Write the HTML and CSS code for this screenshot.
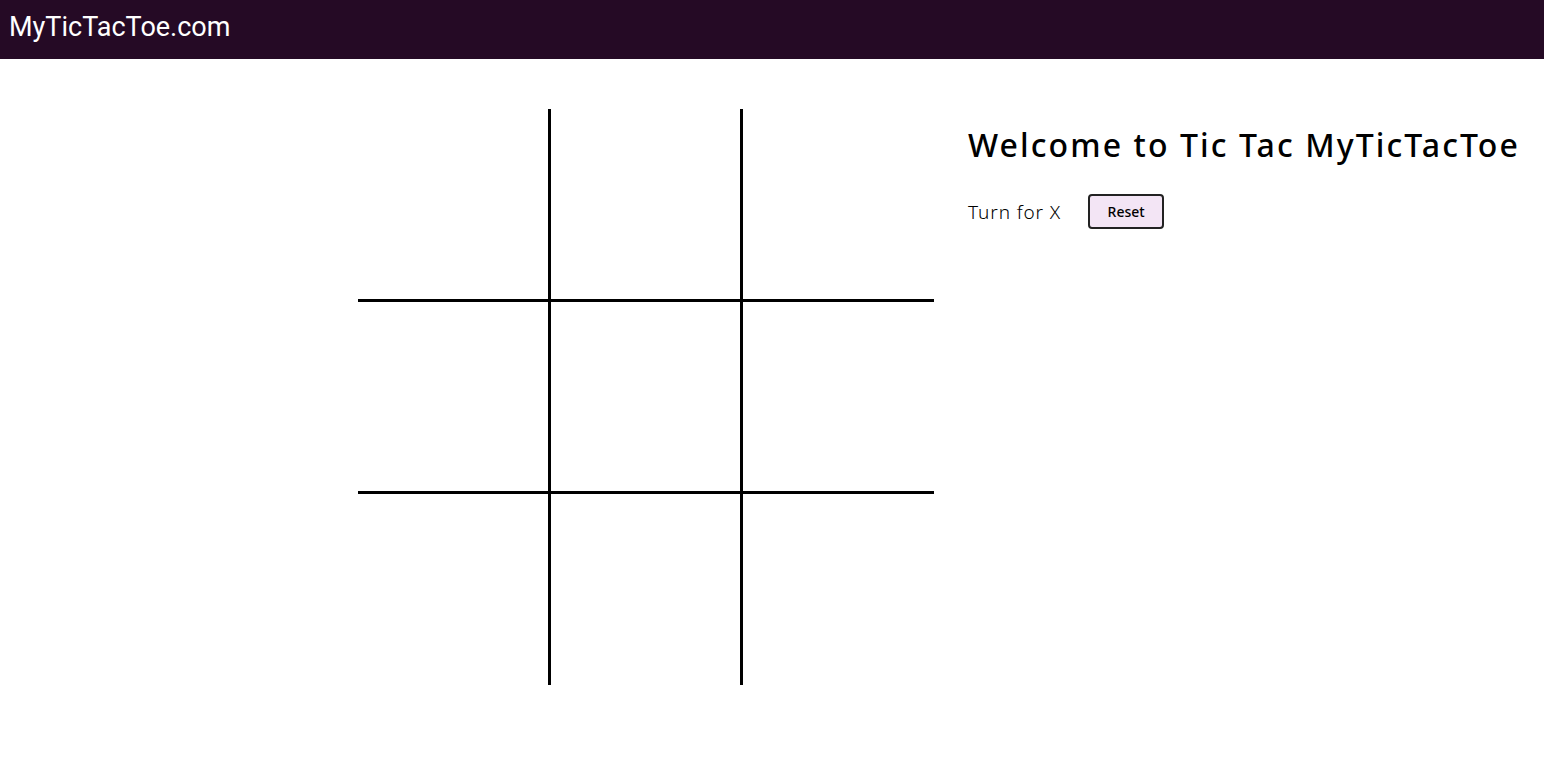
FILE: index.html
```html
<!DOCTYPE html>
<html>
<head>
<meta charset="utf-8">
<link rel="stylesheet" href="styles.css">
</head>
<body>
<header class="topbar">MyTicTacToe.com</header>
<main class="page">
  <div class="board">
    <div class="cell"></div><div class="cell"></div><div class="cell"></div>
    <div class="cell"></div><div class="cell"></div><div class="cell"></div>
    <div class="cell"></div><div class="cell"></div><div class="cell"></div>
  </div>
  <section class="panel">
    <h1 class="title">Welcome to Tic Tac MyTicTacToe</h1>
    <div class="status">
      <span class="turn">Turn for X</span>
      <button class="reset">Reset</button>
    </div>
  </section>
</main>
</body>
</html>
```
FILE: styles.css
```css
html, body {
  margin: 0;
  padding: 0;
  background: #fff;
}
body {
  font-family: "Noto Sans", "DejaVu Sans", sans-serif;
  color: #000;
}
.topbar {
  height: 59px;
  box-sizing: border-box;
  background: #250a25;
  color: #fff;
  font-family: Roboto, "Liberation Sans", sans-serif;
  font-size: 27px;
  line-height: 54px;
  padding-left: 9px;
}
.page {
  display: flex;
  align-items: flex-start;
  padding: 50px 0 0 358px;
  gap: 34px;
}
.board {
  display: grid;
  grid-template-columns: 190px 189px 191px;
  grid-template-rows: 190px 189px 191px;
  gap: 3px;
  background: #000;
  width: 576px;
  height: 576px;
}
.cell {
  background: #fff;
}
.panel {
  padding-top: 14px;
}
.title {
  margin: 0;
  font-size: 32px;
  font-weight: 500;
  line-height: 44px;
  letter-spacing: 2.1px;
}
.status {
  display: flex;
  align-items: center;
  gap: 27px;
  margin-top: 27px;
}
.turn {
  font-size: 19px;
  font-weight: 300;
  letter-spacing: 0.9px;
}
.reset {
  width: 76px;
  height: 35px;
  box-sizing: border-box;
  background: #f3e5f5;
  border: 2px solid #222;
  border-radius: 4px;
  font-family: "Noto Sans", sans-serif;
  font-size: 14px;
  font-weight: 500;
  color: #000;
  padding: 0;
}
```
